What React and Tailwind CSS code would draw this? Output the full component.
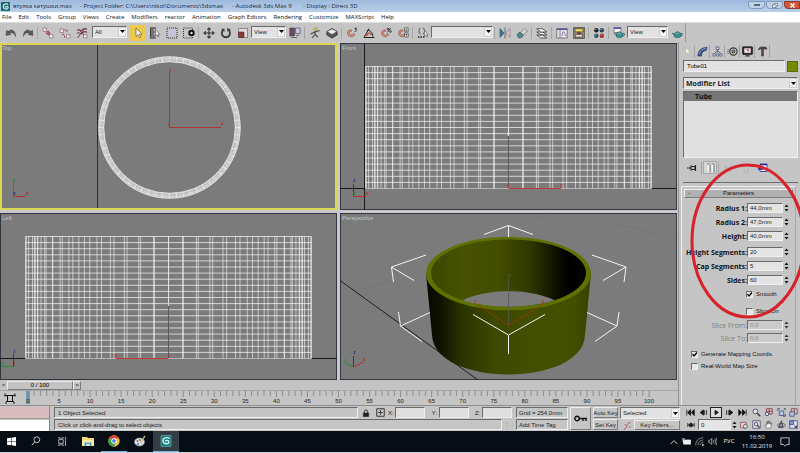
import clsx from 'clsx';

const menus = ['File', 'Edit', 'Tools', 'Group', 'Views', 'Create', 'Modifiers', 'reactor', 'Animation', 'Graph Editors', 'Rendering', 'Customize', 'MAXScript', 'Help'];

/* ---------- icons ---------- */

function Svg({ children, size = 'size-[12px]', box = '0 0 12 12' }) {
  return (
    <svg viewBox={box} className={clsx('shrink-0', size)} fill="none" stroke="#333" strokeWidth="1" aria-hidden="true">
      {children}
    </svg>
  );
}

const magnet = (
  <path d="M6 3.2C3.6 2 .8 4 1.6 7c.6 2.6 3.4 3.6 5.6 2.2L9 7.6 7.8 6.4 6.2 7.6C4.8 8.4 3.6 7.8 3.4 6.6c-.2-1.4.6-2.2 2-2z" fill="#d98a78" stroke="#7d4a40" strokeWidth=".5" />
);

const teapot = (
  <>
    <ellipse cx="6.5" cy="8" rx="3.6" ry="2.8" fill="#3f8f92" stroke="#1d4c50" strokeWidth=".5" />
    <path d="M3.4 8 1 6M10 6.5c2.2-.6 1.8 2.4-.4 2.6M5.6 5h1.8" stroke="#1d4c50" strokeWidth=".9" />
    <path d="M4.6 7c1-1 2-1 3-.8" stroke="#b5e2e2" strokeWidth=".7" />
  </>
);

const icons = {
  undo: <path d="M1 8.5 1.5 3l1.6 1.6C6 1.4 10.5 3 10.6 9.5 9.5 6 7 4.8 4.6 6.2L6 7.6z" fill="#5a5a5a" stroke="#333" strokeWidth=".4" />,
  redo: <path d="M11 8.5 10.5 3 8.9 4.6C6 1.4 1.5 3 1.4 9.5 2.5 6 5 4.8 7.4 6.2L6 7.6z" fill="#5a5a5a" stroke="#333" strokeWidth=".4" />,
  link: (
    <>
      <path d="M1 1h3.5v3.5H1zM7.5 7.5H11V11H7.5z" fill="#efe6ea" stroke="#8a6a76" strokeWidth=".7" />
      <path d="M4 5.5 7 8M5.5 4 8 6.8" stroke="#9a3550" strokeWidth="1.3" />
    </>
  ),
  unlink: (
    <>
      <path d="M1 2h3.5v3.5H1zM7.5 7.5H11V11H7.5z" fill="#efe6ea" stroke="#8a6a76" strokeWidth=".7" />
      <path d="m3 8 2-1.2M7 4.5 9 3M6 2v1.5M5.5 8.5v2" stroke="#9a3550" strokeWidth="1" />
    </>
  ),
  bind: (
    <>
      <path d="M1 3.5C3 1 4 5 6 3s3-2 5-.8M1 6.5C3 4 4 8 6 6s3-2 5-.8" stroke="#6b3a4c" strokeWidth="1.1" />
      <path d="M7.5 7.5H11V11H7.5z" fill="#efe6ea" stroke="#8a6a76" strokeWidth=".7" />
      <path d="M9 1 1.5 11M2 2l6 6" stroke="#7c2f48" strokeWidth="1" />
    </>
  ),
  arrow: <path d="M4 1v8.5l2-1.8 1.4 3 1.3-.6-1.3-2.9H10z" fill="#fff" stroke="#6d5410" strokeWidth=".7" />,
  byName: (
    <>
      <path d="M1 1h6M1 3h4M1 5h5M1 7h4M1 9h5M1 11h6" stroke="#222" strokeWidth="1.1" />
      <path d="M1.5 1v10" stroke="#444" />
      <path d="M6.5 2.500v6.5l1.500-1.300 1 2.300 1-.5-1-2.200h1.700z" fill="#eee" stroke="#333" strokeWidth=".5" />
    </>
  ),
  rect: <path d="M1 1h10v10H1z" fill="#c4c6d8" stroke="#222" strokeDasharray="1 1" />,
  crossing: (
    <>
      <path d="M.5 1h9v10h-9z" stroke="#333" strokeDasharray="1 1" />
      <circle cx="8.5" cy="6" r="3.2" fill="#111" stroke="none" />
      <circle cx="8.5" cy="6" r="1.2" fill="#ddd" stroke="none" />
    </>
  ),
  move: <path d="M6 1v10M1 6h10M4.3 2.7 6 1l1.7 1.7M4.3 9.3 6 11l1.7-1.7M2.7 4.3 1 6l1.7 1.7M9.3 4.3 11 6 9.3 7.7" stroke="#333" strokeWidth="1.1" />,
  rotate: (
    <>
      <path d="M3 3C.5 6 2 10.2 6 10.2S11 6 9 3.2" stroke="#3a3a3a" strokeWidth="1.9" />
      <path d="M7 4.5 7.5 1l3.500 1.800zM1 1.800h3.500V5z" fill="#3a3a3a" stroke="none" />
    </>
  ),
  scale: (
    <>
      <path d="M1.5 1.5h9v9h-9z" fill="#e6dcdc" stroke="#666" strokeWidth=".7" />
      <path d="M1.5 5h5.5v5.5H1.5z" fill="#8d3c3c" stroke="#552020" strokeWidth=".6" />
    </>
  ),
  center: (
    <>
      <path d="M.8 1h4.7v8H.8z" fill="#6a4a5c" stroke="#333" strokeWidth=".5" />
      <path d="M6.5 1h4.7v5.5H6.5z" fill="#c3c5dd" stroke="#4b4d70" strokeWidth=".7" />
      <path d="M2 10.5h6M7 8.5h3" stroke="#555" strokeWidth=".8" />
    </>
  ),
  manipulate: (
    <>
      <path d="M6 4v3.500L3 11M6 7.500 9 10M1.500 7 6 5l4.500-1.500" stroke="#444" strokeWidth="1.1" />
      <circle cx="6.500" cy="2.300" r="1.600" fill="#d9cd69" stroke="#77702a" strokeWidth=".5" />
    </>
  ),
  keyboard: (
    <>
      <path d="M.8 4.5 6 1.5l5.2 3V8L6 11.2.8 8z" fill="#555" stroke="#222" strokeWidth=".6" />
      <path d="M1 4.5 6 2l5 2.5-5 3z" fill="#eee" stroke="#444" strokeWidth=".5" />
    </>
  ),
  snap: (
    <>
      {magnet}
      <path d="M8.5 1.2h2L9.5 2.6c1.6 0 1.5 2-.8 1.7" stroke="#111" strokeWidth=".8" />
    </>
  ),
  angle: (
    <>
      <path d="M1 10.5h10.5M1 10.5 6 1.5M4 3.5c3.5-.5 5.5 2 6 6" stroke="#222" />
      <path d="M4 9c-.5-3 3-4 4.5-1" stroke="#b8604e" strokeWidth="1.8" />
    </>
  ),
  percent: (
    <>
      {magnet}
      <path d="m10.8 1-3.3 4.3" stroke="#111" strokeWidth=".8" />
      <circle cx="8" cy="2" r=".9" stroke="#111" strokeWidth=".7" />
      <circle cx="10.5" cy="4.5" r=".9" stroke="#111" strokeWidth=".7" />
    </>
  ),
  spinnerSnap: (
    <>
      {magnet}
      <path d="M7.5.8h3.7v4H7.5zM7.5 6h3.7v4H7.5z" fill="#ddd" stroke="#333" strokeWidth=".6" />
      <path d="m8.3 3.5 1-1.5 1 1.5zM8.3 7.3h2l-1 1.5z" fill="#111" stroke="none" />
    </>
  ),
  named: (
    <>
      <path d="M3.5 1C1.8 1 2.8 3.5 1.5 4c1.3.5.3 3 2 3M6 1c1.7 0 .7 2.5 2 3-1.3.5-.3 3-2 3" stroke="#444" strokeWidth=".9" />
      <path d="M7.5 3v6l1.3-1.1 1 2 .8-.4-.9-2H11z" fill="#eee" stroke="#444" strokeWidth=".5" />
      <path d="M1 10h1.5M3.5 10H5M6 10h1.5" stroke="#222" strokeWidth="1.3" />
    </>
  ),
  mirror: (
    <>
      <path d="M1 1.5v9L5 6z" fill="#3f7287" stroke="#274757" strokeWidth=".5" />
      <path d="M11 1.5v9L7 6z" fill="#d2c3c9" stroke="#7c6069" strokeWidth=".5" />
      <path d="M6 .5v11" stroke="#444" strokeWidth=".7" />
    </>
  ),
  align: (
    <>
      <path d="m4.5 5.5 4-4 3 2.5-4 4z" fill="#d8d0d4" stroke="#666" strokeWidth=".6" />
      <path d="m1 7.5 3-2.5 3.5 3.5-2.5 2.3H2.5z" fill="#4f8790" stroke="#22474e" strokeWidth=".6" />
    </>
  ),
  layers: (
    <>
      <path d="M.8 8h6l4 3h-6zM.8 5h6l4 3h-6z" fill="#eee" stroke="#333" strokeWidth=".8" />
      <path d="M.8 1.8h6l4 3.2h-6z" fill="#fff" stroke="#333" strokeWidth=".8" />
    </>
  ),
  curve: (
    <>
      <path d="M.8 1.5h10.4v9.5H.8z" fill="#e4e4ea" stroke="#555" strokeWidth=".7" />
      <path d="M.8 2.3h10.4" stroke="#5a5aa0" strokeWidth="1.5" />
      <path d="M4 3v8M6 9c.5-6 2.5-5 3.5 0" stroke="#7a5a8a" strokeWidth=".8" />
    </>
  ),
  schematic: (
    <>
      <path d="M.5.5h11v11H.5z" fill="#8a8578" stroke="#4a473f" strokeWidth=".7" />
      <path d="M2 1.800h8v3H2z" fill="#f4df5c" stroke="#222" strokeWidth=".5" />
      <path d="M2.500 7.500h7v2.500h-7z" fill="#f3d9d0" stroke="#222" strokeWidth=".5" />
      <path d="M6 4.800v2.700M4 6.200h4" stroke="#7d2020" strokeWidth=".9" />
    </>
  ),
  material: (
    <>
      <circle cx="3.3" cy="3.3" r="2.2" fill="#222" stroke="none" />
      <circle cx="8.8" cy="3.3" r="2.2" fill="#27475f" stroke="none" />
      <circle cx="3.3" cy="8.8" r="2.2" fill="#25535e" stroke="none" />
      <circle cx="8.8" cy="8.8" r="2.2" fill="#a02c2c" stroke="none" />
      <path d="M2.3 2.5h1M7.8 2.5h1M2.3 8h1M7.8 8h1" stroke="#eee" strokeWidth=".8" />
    </>
  ),
  render: (
    <>
      <path d="M1 .5h7v5H1z" fill="#f2f2f7" stroke="#555" strokeWidth=".6" />
      <path d="M1 1.2h7" stroke="#4646a0" strokeWidth="1.4" />
      {teapot}
    </>
  ),
  quick: teapot,
  create: <path d="M4 1.5v7l1.8-1.5 1.3 3 1.2-.6L7 6.7h2.3zM1.5 1l1 1M1 4h1.5M9 2 7.5 3" fill="#fbfbf0" stroke="#a5a59a" strokeWidth=".6" />,
  modify: (
    <>
      <path d="M1 11C1 5 4.5 1.5 11 1.5L10 5C7 5 5 7 4.8 11z" fill="#39528c" stroke="#1c2545" strokeWidth=".6" />
      <path d="M2.5 9C3 5 6 3 10 2.7" stroke="#b3c2ea" strokeWidth=".7" />
    </>
  ),
  hierarchy: (
    <>
      <path d="M4.5 1h3v3h-3z" fill="#dde" stroke="#335" strokeWidth=".7" />
      <path d="M6 4v3M6 5 2.5 8.5M6 5l3.5 3.5" stroke="#456" strokeWidth=".8" />
      <path d="M1 8.5h2.5V11H1zM4.8 8.5h2.5V11H4.8zM8.5 8.5H11V11H8.500z" fill="#cde" stroke="#335" strokeWidth=".6" />
    </>
  ),
  motion: (
    <>
      <circle cx="7" cy="6" r="4" stroke="#333" strokeWidth="1.2" />
      <circle cx="7" cy="6" r="1.7" fill="#888" stroke="#222" strokeWidth=".8" />
      <path d="M.5 4h2M0 6h2M.5 8h2" stroke="#666" strokeWidth=".8" />
    </>
  ),
  display: (
    <>
      <path d="M.8 1h10.4v8H.8z" fill="#333" stroke="#111" />
      <path d="M2.5 2.5h7v5h-7z" fill="#f3e3ea" stroke="none" />
      <path d="M4.5 3.5h3l-.5 3z" fill="#c23a5e" stroke="none" />
      <path d="M3.5 10.8h5" stroke="#222" strokeWidth="1.2" />
    </>
  ),
  utilities: <path d="M1.500 4C2 1.800 3.500 1 5.500 1h4l1.500 2.300H7V11H5V3.300C3.800 3.100 3 3.300 2.500 4z" fill="#5a4444" stroke="#222" strokeWidth=".5" />,
  pin: <path d="M1 6h4M5 3.5v5M5 4.5h4v3H5M9.5 3v6" stroke="#222" strokeWidth="1.1" />,
  showEnd: (
    <>
      <path d="M3.5 2v8.5M7.5 2v8.5" stroke="#f5f5f5" strokeWidth="2" />
      <path d="M2 2h3M6.5 2h3M5 3v7.5M9 3v7.5" stroke="#444" strokeWidth=".7" />
    </>
  ),
  unique: <path d="M2 4l3 4M7 5v5M4 9h2" stroke="#a9a9a9" strokeWidth="1" />,
  trash: <path d="M3 3h6M4 4v6h4V4" stroke="#b4b4b4" strokeWidth="1" />,
  configure: (
    <>
      <path d="M3 2h7v7.5H3z" fill="#eef" stroke="#22228a" strokeWidth=".8" />
      <path d="M3 2.600h7M1 7h5" stroke="#22228a" strokeWidth="1.400" />
    </>
  ),
};

function ToolButton({ name, label, className }) {
  return (
    <button type="button" aria-label={label || name} className={clsx('flex h-[16px] w-[17px] shrink-0 items-center justify-center', className)}>
      <Svg>{icons[name]}</Svg>
    </button>
  );
}

function Sep() {
  return (
    <span className="flex w-[3px] shrink-0 justify-center">
      <span className="h-[12px] w-px bg-[#a6a6a6]" />
    </span>
  );
}

const sunken = 'border border-t-[#6a6a6a] border-l-[#6a6a6a] border-r-[#efefef] border-b-[#efefef]';
const raised = 'border border-t-[#ededed] border-l-[#ededed] border-r-[#7c7c7c] border-b-[#7c7c7c]';

function Combo({ label, value, className, textClass = 'text-[6px]' }) {
  return (
    <span className={clsx('relative block h-[12px] shrink-0', className)}>
      <select aria-label={label} className={clsx('block h-full w-full appearance-none bg-[#e2e2e2] pl-[2px] leading-none text-[#222] outline-none', sunken, textClass)}>
        <option>{value}</option>
      </select>
      <span className="pointer-events-none absolute top-px right-px bottom-px flex w-[8px] items-center justify-center border border-[#cfcfcf] bg-[#f4f4f4]">
        <svg viewBox="0 0 5 3" className="h-[3px] w-[5px]">
          <path d="M0 0h5L2.5 3z" fill="#000" />
        </svg>
      </span>
    </span>
  );
}

/* ---------- top bars ---------- */

function TitleBar() {
  return (
    <header className="flex h-[12px] shrink-0 items-center bg-linear-to-b from-[#9db9dc] to-[#b9cfe9] font-['Open_Sans',sans-serif] text-[6px] leading-none text-[#1b2636]">
      <svg viewBox="0 0 10 10" className="ml-px size-[9px]">
        <rect width="10" height="10" rx="1" fill="#17686a" />
        <path d="M8 3C6 1 2 2.5 2.500 5.500S7 8.500 8 6.500c0-1.500-2.500-2-3.500-.5" fill="none" stroke="#d6f3ef" strokeWidth="1.3" />
      </svg>
      <h1 className="ml-[3px] w-[67px] whitespace-nowrap">втулка катушки.max</h1>
      <span className="w-[152px] whitespace-nowrap">- Project Folder: C:\Users\nikol\Documents\3dsmax</span>
      <span className="w-[71px] whitespace-nowrap">- Autodesk 3ds Max 9</span>
      <span className="whitespace-nowrap">- Display : Direct 3D</span>
      <span className="mb-[2px] ml-auto flex gap-px">
        <button type="button" aria-label="Minimize" className="flex h-[8px] w-[17px] items-center justify-center rounded-b-sm border border-[#8499b5] bg-[#c0d2e8]">
          <span className="h-[2px] w-[6px] border border-[#5a6a80] bg-white" />
        </button>
        <button type="button" aria-label="Restore" className="flex h-[8px] w-[17px] items-center justify-center rounded-b-sm border border-[#8499b5] bg-[#c0d2e8]">
          <svg viewBox="0 0 6 5" className="h-[5px] w-[6px]" fill="#fff" stroke="#5a6a80" strokeWidth=".7">
            <path d="M2 .5h3.5v2.5H2z" />
            <path d="M.5 2H4v2.5H.5z" />
          </svg>
        </button>
        <button type="button" aria-label="Close" className="flex h-[8px] w-[16px] items-center justify-center rounded-bl-sm border border-[#8e3a2c] bg-[#d2553c]">
          <svg viewBox="0 0 5 5" className="size-[5px]" stroke="#fff" strokeWidth="1.3">
            <path d="m.5.5 4 4M4.5.5l-4 4" />
          </svg>
        </button>
      </span>
    </header>
  );
}

function MenuBar() {
  return (
    <nav className="flex h-[10px] shrink-0 items-center gap-[7px] bg-white pl-[2px] font-['Open_Sans',sans-serif] text-[6px] leading-none text-[#111]">
      {menus.map((item) => (
        <button key={item} type="button" className="whitespace-nowrap">
          {item}
        </button>
      ))}
    </nav>
  );
}

function Toolbar() {
  return (
    <div className="flex h-[20px] shrink-0 items-center border-t border-[#dcdcdc] bg-[#c5c5c5] pl-[2px]">
      <ToolButton name="undo" />
      <ToolButton name="redo" />
      <Sep />
      <ToolButton name="link" />
      <ToolButton name="unlink" />
      <ToolButton name="bind" />
      <Combo label="Selection filter" value="All" className="mr-[2px] mb-[2px] ml-[2px] w-[35px]" />
      <ToolButton name="arrow" label="Select" className="bg-[#edc850]" />
      <ToolButton name="byName" />
      <ToolButton name="rect" />
      <ToolButton name="crossing" />
      <Sep />
      <ToolButton name="move" />
      <ToolButton name="rotate" />
      <ToolButton name="scale" />
      <Combo label="Reference coordinate system" value="View" className="mb-[2px] w-[35px]" />
      <ToolButton name="center" />
      <Sep />
      <ToolButton name="manipulate" />
      <ToolButton name="keyboard" />
      <Sep />
      <ToolButton name="snap" />
      <ToolButton name="angle" />
      <ToolButton name="percent" />
      <ToolButton name="spinnerSnap" />
      <Sep />
      <ToolButton name="named" />
      <Combo label="Named selection sets" value="" className="mb-[2px] w-[62px]" />
      <Sep />
      <ToolButton name="mirror" />
      <ToolButton name="align" />
      <Sep />
      <ToolButton name="layers" />
      <Sep />
      <ToolButton name="curve" />
      <ToolButton name="schematic" />
      <Sep />
      <ToolButton name="material" />
      <Sep />
      <ToolButton name="render" />
      <Combo label="Render type" value="View" className="mb-[2px] w-[41px]" />
      <ToolButton name="quick" />
      <span className="h-full w-px bg-[#9a9a9a]" />
    </div>
  );
}

/* ---------- viewports ---------- */

function Viewport({ name, active, children }) {
  return (
    <section className={clsx('relative min-h-0 min-w-0 bg-[#7b7b7b] ring-inset', active ? 'ring-2 ring-[#dcd650]' : 'ring-1 ring-[#34363f]')}>
      <svg viewBox="0 0 337 167" className="block h-full w-full" fill="none">
        {children}
      </svg>
      <h2 className="absolute top-px left-[2px] text-[6px] leading-[8px] text-[#c6c6c6]">{name}</h2>
    </section>
  );
}

function AxisLabel({ x, y, color, children }) {
  return (
    <text x={x} y={y} fill={color} fontSize="5" fontWeight="bold">
      {children}
    </text>
  );
}

const levels = Array.from({ length: 21 }, (_, i) => i);
const sides = Array.from({ length: 31 }, (_, i) => ((i - 15) * 6 * Math.PI) / 180);

// side view of the tube: 20 height segments, 60 sides, outer and inner wall
function SideMesh({ cx }) {
  return (
    <g stroke="#fff">
      {levels.map((i) => (
        <path key={i} d={`M${cx - 143} ${23.5 + i * 6.1}H${cx + 143}`} strokeWidth=".9" strokeOpacity=".75" />
      ))}
      {sides.map((a) => (
        <g key={a} strokeOpacity=".7" strokeWidth=".8">
          <path d={`M${cx + 143 * Math.sin(a)} 23.5v122`} />
          <path d={`M${cx + 134 * Math.sin(a)} 23.5v122`} />
        </g>
      ))}
    </g>
  );
}

function TopView() {
  return (
    <Viewport name="Top" active>
      <path d="M97.5 2v163" stroke="#2e2e2e" />
      <circle cx="169.5" cy="84.5" r="68.2" stroke="#c6c6c6" strokeWidth="5.5" />
      <circle cx="169.5" cy="84.5" r="68.2" stroke="#efefef" strokeWidth="5" strokeDasharray=".8 6.320" />
      <circle cx="169.5" cy="84.5" r="70.7" stroke="#e4e4e4" strokeWidth=".8" />
      <circle cx="169.5" cy="84.5" r="69" stroke="#ececec" strokeWidth=".7" strokeDasharray="2 2" />
      <circle cx="169.5" cy="84.5" r="67.4" stroke="#a6a6a6" strokeWidth=".7" strokeDasharray="1 3" />
      <circle cx="169.5" cy="84.5" r="65.8" stroke="#e8e8e8" strokeWidth=".8" />
      <path d="M169.5 29v55.5H221" stroke="#b03434" />
      <AxisLabel x="169" y="29" color="#b03434">y</AxisLabel>
      <AxisLabel x="221" y="82" color="#b03434">x</AxisLabel>
      <AxisLabel x="168" y="83" color="#b03434">z</AxisLabel>
      <path d="M13.5 137v16" stroke="#2d8b34" />
      <path d="M13.5 153.5H26" stroke="#b8302c" />
      <AxisLabel x="13" y="138" color="#2d8b34">y</AxisLabel>
      <AxisLabel x="26" y="152" color="#b8302c">x</AxisLabel>
      <AxisLabel x="13" y="152" color="#22307c">z</AxisLabel>
    </Viewport>
  );
}

function FrontView() {
  return (
    <Viewport name="Front">
      <path d="M24.5 0v167M0 145.5h337" stroke="#16181c" />
      <SideMesh cx={168.5} />
      <path d="M168.5 93v52" stroke="#5c5c5c" />
      <path d="M168.5 145.5H221" stroke="#c23a3a" />
      <AxisLabel x="167" y="92" color="#ddd">z</AxisLabel>
      <AxisLabel x="167" y="144" color="#c23a3a">y</AxisLabel>
      <AxisLabel x="220" y="144" color="#c23a3a">x</AxisLabel>
      <path d="M13.5 141v12" stroke="#2a2f9a" />
      <path d="M13.5 153.5H26" stroke="#b8302c" />
      <AxisLabel x="13" y="139" color="#2a2f9a">z</AxisLabel>
      <AxisLabel x="26" y="152" color="#b8302c">x</AxisLabel>
      <AxisLabel x="13" y="152" color="#2d8b34">y</AxisLabel>
    </Viewport>
  );
}

function LeftView() {
  return (
    <Viewport name="Left">
      <path d="M0 145.5h337" stroke="#16181c" />
      <SideMesh cx={168.5} />
      <path d="M168.5 93v52" stroke="#5c5c5c" />
      <path d="M168.5 145.5H116" stroke="#c23a3a" />
      <AxisLabel x="168" y="92" color="#aaa">z</AxisLabel>
      <AxisLabel x="115" y="144" color="#c23a3a">y</AxisLabel>
      <AxisLabel x="168" y="144" color="#c23a3a">x</AxisLabel>
      <path d="M13.5 141v13" stroke="#2a2f9a" />
      <path d="M13.5 153.5H2" stroke="#2d8b34" />
      <AxisLabel x="13" y="140" color="#2a2f9a">z</AxisLabel>
      <AxisLabel x="1" y="152" color="#2d8b34">y</AxisLabel>
      <AxisLabel x="13" y="152" color="#b8302c">x</AxisLabel>
    </Viewport>
  );
}

function PerspectiveView() {
  return (
    <Viewport name="Perspective">
      <defs>
        <linearGradient id="outer" x1="86" x2="251" y1="0" y2="0" gradientUnits="userSpaceOnUse">
          <stop offset="0" stopColor="#060700" />
          <stop offset=".08" stopColor="#0e1100" />
          <stop offset=".22" stopColor="#2b3400" />
          <stop offset=".4" stopColor="#3c4700" />
          <stop offset=".65" stopColor="#434f00" />
          <stop offset=".9" stopColor="#424e00" />
          <stop offset="1" stopColor="#374100" />
        </linearGradient>
        <linearGradient id="inner" x1="91" x2="246" y1="0" y2="0" gradientUnits="userSpaceOnUse">
          <stop offset="0" stopColor="#3c4700" />
          <stop offset=".2" stopColor="#465200" />
          <stop offset=".45" stopColor="#424d00" />
          <stop offset=".65" stopColor="#2e3600" />
          <stop offset=".8" stopColor="#0f1200" />
          <stop offset=".89" stopColor="#000" />
          <stop offset="1" stopColor="#050600" />
        </linearGradient>
        <clipPath id="mouth">
          <ellipse cx="168.5" cy="60" rx="77.5" ry="33.8" />
        </clipPath>
      </defs>
      <path d="M0 67.5 138 167" stroke="#1c1c1c" />
      <path d="M20 77 52 68M185 10l25-8M275 10l60 16" stroke="#757575" />
      <path d="M86 60.5 92 122C93 147 128 161.5 168.5 161.5S244 147 245 122L251 60.5z" fill="url(#outer)" />
      <ellipse cx="168.5" cy="60.5" rx="82.5" ry="36.7" fill="#5f7200" />
      <ellipse cx="168.5" cy="60" rx="77.5" ry="33.8" fill="url(#inner)" />
      <g clipPath="url(#mouth)">
        <ellipse cx="168.5" cy="118" rx="72" ry="40" fill="#7b7b7b" />
      </g>
      <path d="M168.5 65v47" stroke="#565656" strokeWidth=".8" />
      <path d="m137 91 31.5 21.5L203 91" stroke="#8c3a0c" />
      <AxisLabel x="168" y="64" color="#555">z</AxisLabel>
      <AxisLabel x="134" y="90" color="#b8401c">y</AxisLabel>
      <AxisLabel x="202" y="90" color="#b8401c">x</AxisLabel>
      <g stroke="#f4f4f4">
        <path d="m144 21.5 24.5-9L193 21.5M168.5 12.5V24" />
        <path d="m86 42-34.5 12L74 67.5M51.5 54l2 15" />
        <path d="m252 42 34 12-23 13.5M286 54l-2 15" />
        <path d="M90 99.5 60.5 113 82 128.5M60.5 113 58.5 99" />
        <path d="m247 99.5 30 13.5-22 15.5M277 113l2-14" />
        <path d="m133 101.5 35.5 20.5L205 101.5M168.5 122v19" />
      </g>
      <path d="M13.5 143v11" stroke="#2a2f9a" />
      <path d="m13.5 154 10-5" stroke="#b8302c" />
      <path d="m13.5 154-8-4" stroke="#2d8b34" />
      <AxisLabel x="13" y="141" color="#2a2f9a">z</AxisLabel>
      <AxisLabel x="23" y="148" color="#b8302c">x</AxisLabel>
      <AxisLabel x="4" y="149" color="#2d8b34">y</AxisLabel>
    </Viewport>
  );
}

function TimeSlider() {
  return (
    <div className="flex h-[11px] shrink-0 items-center border-b border-[#a8a8a8] bg-[#c3c3c3] text-[6px] leading-none">
      <button type="button" aria-label="Previous frame" className="w-[7px]">&lt;</button>
      <button type="button" className={clsx('h-[9px] w-[66px]', raised)}>0 / 100</button>
      <button type="button" aria-label="Next frame" className={clsx('flex h-[9px] w-[8px] items-center justify-center', raised)}>&gt;</button>
    </div>
  );
}

function TrackBar() {
  const frames = Array.from({ length: 101 }, (_, i) => i);
  return (
    <div className="flex h-[14px] shrink-0 items-center bg-[#c5c5c5]">
      <svg viewBox="0 0 678 14" className="h-full w-full">
        <path d="M5 4.5h10M6 10.5h8M7.5 4.5v6M12.5 4.5v6M5 2.5v3M15 2.5v3M5 12h2M13 12h2" stroke="#111" fill="none" />
        <rect x="26" y="0" width="4" height="13" fill="#6f9bb0" />
        {frames.map((f) => (
          <path key={f} d={`M${28 + f * 6.21} 0v${f % 5 === 0 ? 6 : 5}`} stroke="#7e7e7e" strokeWidth=".8" />
        ))}
        {frames.filter((f) => f % 5 === 0).map((f) => (
          <text key={f} x={28 + f * 6.21} y="12" fontSize="6" textAnchor="middle" fill="#222">
            {f}
          </text>
        ))}
      </svg>
    </div>
  );
}

/* ---------- command panel ---------- */

function Spinner({ disabled }) {
  return (
    <span className={clsx('flex h-[9px] w-[7px] flex-col items-center justify-center', disabled && 'opacity-80')}>
      <svg viewBox="0 0 5 8" className="h-[8px] w-[5px]">
        <path d="M.5 3 2.5.5 4.5 3zM.5 5h4l-2 2.5z" fill="#111" />
      </svg>
    </span>
  );
}

function Param({ id, label, value, disabled }) {
  return (
    <div className="flex h-[10px] items-center">
      <label
        htmlFor={id}
        className={clsx(
          "flex-1 text-right font-['Open_Sans',sans-serif] text-[7px] leading-none whitespace-nowrap",
          disabled ? 'text-[#7d7d7d]' : 'font-bold text-[#111]'
        )}
      >
        {label}
      </label>
      <input
        id={id}
        type="text"
        defaultValue={value}
        disabled={disabled}
        className={clsx('h-[10px] w-[36px] px-[2px] text-[6px] leading-none outline-none', sunken, disabled ? 'bg-[#cbcbcb] text-[#8a8a8a]' : 'bg-[#e4e4e4] text-[#222]')}
      />
      <Spinner disabled={disabled} />
    </div>
  );
}

function Check({ id, label, checked, className }) {
  return (
    <div className={clsx('flex h-[8px] items-center gap-[3px]', className)}>
      <span className="relative flex size-[7px]">
        <input id={id} type="checkbox" defaultChecked={checked} className={clsx('peer size-[7px] appearance-none bg-[#e6e6e6]', sunken)} />
        <svg viewBox="0 0 7 7" className="pointer-events-none absolute inset-0 hidden size-[7px] peer-checked:block" fill="none" stroke="#000" strokeWidth="1.3">
          <path d="M1.5 3.2 3 5l3-3.5" />
        </svg>
      </span>
      <label htmlFor={id} className="text-[6px] leading-none whitespace-nowrap text-[#111]">
        {label}
      </label>
    </div>
  );
}

function CommandPanel() {
  return (
    <aside className="relative w-[122px] shrink-0 overflow-hidden border-l border-[#8f8f8f] bg-[#c5c5c5] pr-[2px] pl-[4px]">
      <div className="-ml-[3px] flex h-[18px] items-center">
        {['create', 'modify', 'hierarchy', 'motion', 'display', 'utilities'].map((tab) => (
          <button key={tab} type="button" aria-label={tab} className="flex h-[13px] w-[15px] items-center justify-center border-r border-[#a2a2a2]">
            <Svg size="size-[11px]">{icons[tab]}</Svg>
          </button>
        ))}
      </div>
      <div className="flex h-[12px] items-center justify-between">
        <input aria-label="Object name" type="text" defaultValue="Tube01" className={clsx('h-[12px] w-[102px] bg-[#e2e2e2] px-[3px] text-[6px] outline-none', sunken)} />
        <button type="button" aria-label="Object color" className="size-[11px] border border-[#5c6b10] bg-[#738a00]" />
      </div>
      <Combo label="Modifier List" value="Modifier List" className="mt-[5px]" textClass="text-[7px] font-bold font-['Open_Sans',sans-serif]" />
      <ul className={clsx('mt-[2px] h-[67px] bg-[#e0e0e0]', sunken)}>
        <li className="h-[9px] bg-[#767676] pl-[11px] font-['Open_Sans',sans-serif] text-[7px] leading-[9px] font-bold text-[#111]">Tube</li>
      </ul>
      <div className="mt-[3px] flex h-[13px] items-center">
        <ToolButton name="pin" />
        <Sep />
        <span className="h-[13px] w-[14px] overflow-hidden border border-[#aaa] bg-[#d4d4d4]">
          <ToolButton name="showEnd" className="-m-[2px]" />
        </span>
        <Sep />
        <ToolButton name="unique" />
        <ToolButton name="trash" />
        <ToolButton name="configure" />
      </div>
      <hr className="mt-[8px] border-t border-[#6e6e6e]" />
      <div className="mt-[3px] mr-[2px] -ml-[2px] h-[222px] border border-[#a6a6a6] border-t-[#eee] border-l-[#eee] px-[2px] pt-[2px]">
        <button type="button" className={clsx('relative block h-[9px] w-full bg-[#b0b0b0] text-center text-[6px] leading-[7px] text-[#111]', raised)}>
          <span className="absolute left-[3px]">-</span>
          Parameters
        </button>
        <form className="pr-[3px]">
          <div className="mt-[5px] flex flex-col gap-[4px]">
            <Param id="radius1" label="Radius 1:" value="44,0mm" />
            <Param id="radius2" label="Radius 2:" value="47,0mm" />
            <Param id="height" label="Height:" value="40,0mm" />
          </div>
          <div className="mt-[6px] flex flex-col gap-[4px]">
            <Param id="heightSegs" label="Height Segments:" value="20" />
            <Param id="capSegs" label="Cap Segments:" value="5" />
            <Param id="sides" label="Sides:" value="60" />
          </div>
          <Check id="smooth" label="Smooth" checked className="mt-[5px] ml-[62px]" />
          <Check id="sliceOn" label="Slice On" className="mt-[9px] ml-[62px]" />
          <div className="mt-[5px] flex flex-col gap-[3px]">
            <Param id="sliceFrom" label="Slice From:" value="0,0" disabled />
            <Param id="sliceTo" label="Slice To:" value="0,0" disabled />
          </div>
          <Check id="mapping" label="Generate Mapping Coords." checked className="mt-[7px] ml-[7px]" />
          <Check id="realWorld" label="Real-World Map Size" className="mt-[4px] ml-[7px]" />
        </form>
      </div>
      {/* marker round the tube dimensions */}
      <svg viewBox="0 0 122 363" className="pointer-events-none absolute top-0 left-0 h-[363px] w-[122px]" fill="none">
        <ellipse cx="69" cy="199" rx="56" ry="76" stroke="#d8222a" strokeWidth="3" />
      </svg>
    </aside>
  );
}

/* ---------- status bar ---------- */

function Coord({ axis }) {
  return (
    <span className="flex items-center">
      <label htmlFor={`coord${axis}`} className="w-[7px]">{axis}:</label>
      <input id={`coord${axis}`} type="text" className={clsx('h-[11px] w-[30px] bg-[#dedede] px-[2px] outline-none', sunken)} />
    </span>
  );
}

const play = {
  start: <path d="M1 2v8M6 2 2 6l4 4zM11 2 7 6l4 4z" />,
  prev: <path d="M6 2.5 1.5 6 6 9.5zM7.5 3v6M10 3v6" />,
  play: <path d="M4 3v6l4.5-3z" />,
  next: <path d="m6 2.5 4.5 3.5L6 9.5zM4.5 3v6M2 3v6" />,
  end: <path d="M11 2v8M6 2l4 4-4 4zM1 2l4 4-4 4z" />,
};

const nav = {
  zoom: (
    <>
      <circle cx="4.5" cy="4.5" r="3.2" fill="#dfe6f2" stroke="#334" />
      <path d="m7 7 4 4" stroke="#334" strokeWidth="1.8" />
    </>
  ),
  zoomAll: (
    <>
      <path d="M3 1h8v7H3zM7 1v7M3 4.5h8" stroke="#8a2f3c" />
      <circle cx="4" cy="8" r="2.3" fill="#dfe6f2" stroke="#335" />
    </>
  ),
  extents: (
    <>
      <path d="M3 4h6v6H3z" fill="#b9c1de" stroke="#3c4a86" />
      <path d="M1 4V1h3M11 8v3H8M9 1l2-.5V3" stroke="#334" />
    </>
  ),
  extentsAll: (
    <>
      <path d="M3 1h8v7H3zM7 1v7" stroke="#8a2f3c" />
      <path d="M1 5h6v6H1z" fill="#b9c1de" stroke="#3c4a86" />
    </>
  ),
  region: (
    <>
      <path d="M1 1h10v10H1z" fill="#e2e2ee" stroke="#445" />
      <circle cx="5.5" cy="5.5" r="2.3" stroke="#334" />
      <path d="m7 7 3 3" stroke="#334" strokeWidth="1.5" />
    </>
  ),
  pan: <path d="M3.5 11 1 7l1-.8 1.5 1.3V3l1-.5.6 3V1.5l1.1-.3.5 4 .6-3.4 1 .2v4L9.5 4l1 .3-1 4.2L8.5 11z" fill="#f4f4f4" stroke="#333" strokeWidth=".7" />,
  orbit: (
    <>
      <path d="M6 1 2 10h6z" fill="#99a" stroke="#334" />
      <ellipse cx="6" cy="7" rx="5.3" ry="2.3" stroke="#333" strokeWidth=".8" />
    </>
  ),
  maximize: (
    <>
      <path d="M1 1h10v10H1z" fill="#dfe0f0" stroke="#334a86" />
      <path d="M1 1h5v5H1z" fill="#8f9bc8" stroke="#334a86" />
      <path d="m7 7 3 3M10 7.5V10H7.5" stroke="#222" />
    </>
  ),
};

function StatusBar() {
  return (
    <footer className="flex h-[26px] shrink-0 gap-[2px] border-t border-[#8e8e8e] bg-[#c5c5c5] text-[6px] leading-none text-[#222]">
      <div className="flex w-[50px] shrink-0 flex-col gap-px border-r border-[#888] pt-px">
        <div className="flex-1 border-b border-[#999] bg-[#dbbcbe]" />
        <div className="flex-1 bg-white" />
      </div>
      <div className="flex min-w-0 flex-1 flex-col gap-px py-px pl-[2px]">
        <div className="flex flex-1 items-center justify-between">
          <p className={clsx('flex h-full flex-1 items-center pl-[3px]', sunken)}>1 Object Selected</p>
          <button type="button" aria-label="Selection lock" className="flex w-[16px] justify-center">
            <Svg size="size-[8px]">
              <path d="M3.5 6V3.5C3.5 1 8.5 1 8.5 3.5V6" strokeWidth="1.5" />
              <path d="M2 6h8v5.5H2z" fill="#222" />
            </Svg>
          </button>
          <button type="button" aria-label="Absolute mode" className="mr-[2px] flex w-[12px] justify-center">
            <Svg size="size-[9px]">
              <path d="M1 1h10v10H1zM6 3v6M3 6h6" strokeWidth="1.3" />
            </Svg>
          </button>
          <span className="flex w-[124px] justify-between">
            <Coord axis="X" />
            <Coord axis="Y" />
            <Coord axis="Z" />
          </span>
        </div>
        <div className="flex flex-1 items-center">
          <p className={clsx('flex h-full flex-1 items-center pl-[3px]', sunken)}>Click or click-and-drag to select objects</p>
          <span className="w-[10px] text-center text-[#888]">⁝</span>
        </div>
      </div>
      <div className="flex w-[54px] shrink-0 flex-col gap-px py-px pl-[2px]">
        <p className={clsx('flex flex-1 items-center pl-[2px] whitespace-nowrap', sunken)}>Grid = 254,0mm</p>
        <button type="button" className={clsx('flex-1 pl-[2px] text-left whitespace-nowrap', sunken)}>Add Time Tag</button>
      </div>
      <button type="button" aria-label="Set keys" className={clsx('my-px flex w-[21px] shrink-0 items-center justify-center', raised)}>
        <svg viewBox="0 0 14 7" className="h-[7px] w-[14px]" fill="none" stroke="#111" strokeWidth="1.4">
          <circle cx="3" cy="3.5" r="2.2" />
          <path d="M5.2 3.5H13M9 3.5V6M12 3.5V6" />
        </svg>
      </button>
      <div className="flex w-[25px] shrink-0 flex-col gap-px py-px">
        <button type="button" className={clsx('flex flex-1 items-center justify-center whitespace-nowrap', raised)}>Auto Key</button>
        <button type="button" className={clsx('flex flex-1 items-center justify-center whitespace-nowrap', raised)}>Set Key</button>
      </div>
      <div className="flex w-[60px] shrink-0 flex-col gap-px py-px">
        <Combo label="Key selection" value="Selected" />
        <div className="flex flex-1 items-center">
          <button type="button" aria-label="Default tangents" className="flex w-[14px] justify-center">
            <Svg size="size-[9px]">
              <path d="M1 11c5 0 3-9 9-9M2 5h2M8 8h2" stroke="#a8323e" />
            </Svg>
          </button>
          <button type="button" className={clsx('h-full flex-1 whitespace-nowrap', raised)}>Key Filters...</button>
        </div>
      </div>
      <div className="flex w-[66px] shrink-0 flex-col gap-px py-px pl-[2px]">
        <div className="flex flex-1 items-center justify-between">
          {Object.keys(play).map((key) => (
            <button key={key} type="button" aria-label={key} className={clsx('flex h-[11px] w-[12px] items-center justify-center', key === 'play' && 'border border-[#222] bg-[#ddd]')}>
              <svg viewBox="0 0 12 12" className="size-[9px]" fill="#111" stroke="#111">{play[key]}</svg>
            </button>
          ))}
        </div>
        <div className="flex flex-1 items-center">
          <button type="button" aria-label="Key mode" className="flex w-[14px] justify-center">
            <svg viewBox="0 0 12 12" className="size-[8px]" fill="#111" stroke="#111">
              <path d="M1 3v6M11 3v6M5.5 3 2 6l3.5 3zM6.5 3 10 6 6.5 9z" />
            </svg>
          </button>
          <input aria-label="Current frame" type="text" defaultValue="0" className={clsx('h-[11px] w-[33px] bg-[#e4e4e4] px-[2px] outline-none', sunken)} />
          <Spinner />
          <button type="button" aria-label="Time configuration" className="ml-auto">
            <Svg size="size-[8px]">
              <path d="M1 2h8v8H1z" fill="#e3d4d8" stroke="#8a2f3c" />
              <circle cx="8" cy="8" r="3" fill="#ddd" />
            </Svg>
          </button>
        </div>
      </div>
      <div className="grid w-[50px] shrink-0 grid-cols-4 grid-rows-2 place-items-center">
        {Object.keys(nav).map((key) => (
          <button key={key} type="button" aria-label={key}>
            <Svg size="size-[9px]">{nav[key]}</Svg>
          </button>
        ))}
      </div>
    </footer>
  );
}

/* ---------- taskbar ---------- */

function TaskButton({ label, className, children }) {
  return (
    <button type="button" aria-label={label} className={clsx('flex h-[21px] shrink-0 items-center justify-center border-b', className || 'w-[26px] border-transparent')}>
      {children}
    </button>
  );
}

function Taskbar() {
  return (
    <div className="flex h-[22px] shrink-0 items-center border-b border-[#c8d4dc] bg-[#060d14] font-['Open_Sans',sans-serif] text-[7px] leading-[9px] text-[#e8e8e8]">
      <TaskButton label="Start" className="w-[23px] border-transparent">
        <Svg size="size-[9px]">
          <path d="M0 1.7 5.3 1v4.7H0zM6 .9 12 0v5.7H6zM0 6.4h5.3V11L0 10.3zM6 6.4h6V12l-6-.9z" fill="#fff" stroke="none" />
        </Svg>
      </TaskButton>
      <TaskButton label="Search">
        <Svg size="size-[10px]">
          <circle cx="7" cy="4.5" r="3.5" stroke="#ddd" />
          <path d="m4.5 7-3.5 4" stroke="#ddd" strokeWidth="1.2" />
        </Svg>
      </TaskButton>
      <TaskButton label="Task view">
        <Svg size="size-[9px]">
          <path d="M1 3.5h6v5H1zM1 0v1.5h6V0M1 12v-1.5h6V12M10 0v3M10 5v7M9 4h2" stroke="#ddd" />
        </Svg>
      </TaskButton>
      <TaskButton label="Explorer">
        <Svg size="size-[12px]">
          <path d="M0 2h5l1 1h6v8H0z" fill="#f3d776" stroke="none" />
          <path d="M0 5h12v6H0z" fill="#fbeba6" stroke="none" />
          <path d="M2.5 11V7.5h7V11H7.5V9h-3v2z" fill="#49a5d9" stroke="none" />
        </Svg>
      </TaskButton>
      <TaskButton label="Chrome" className="w-[26px] border-[#76b9ed]">
        <Svg size="size-[12px]">
          <circle cx="6" cy="6" r="5.7" fill="#f0c330" stroke="none" />
          <path d="M6 6 1 3.2A5.7 5.7 0 0 1 11.2 3.6H6z" fill="#dc4437" stroke="none" />
          <path d="M6 6 1 3.2A5.7 5.7 0 0 0 5.5 11.7L8 8z" fill="#3b9c4d" stroke="none" />
          <circle cx="6" cy="6" r="2.4" fill="#4a86e8" stroke="#fff" />
        </Svg>
      </TaskButton>
      <TaskButton label="Paint">
        <Svg size="size-[12px]">
          <ellipse cx="5.5" cy="7" rx="5" ry="4" fill="#dfe3e6" stroke="#8fa0ab" strokeWidth=".6" />
          <circle cx="3.5" cy="6" r="1" fill="#c0504a" stroke="none" />
          <circle cx="6" cy="5" r="1" fill="#4b9b52" stroke="none" />
          <circle cx="4" cy="9" r="1" fill="#3f72b8" stroke="none" />
          <path d="M11 .8 6.5 8" stroke="#d9b382" strokeWidth="1.4" />
        </Svg>
      </TaskButton>
      <TaskButton label="3ds Max" className="w-[26px] border-[#76b9ed] bg-[#343c44]">
        <Svg size="size-[12px]">
          <path d="M1 .5h10v11H1z" fill="#1c7d80" stroke="#6ab9b8" strokeWidth=".6" />
          <path d="M9.5 3.5C7 1.5 2.5 3 3 6.2S8.5 9.5 9 7c0-1.8-2.8-2.2-3.8-.6" stroke="#d6f3ef" strokeWidth="1.3" />
        </Svg>
      </TaskButton>
      <div className="mr-[10px] ml-auto flex items-center gap-[4px]">
        <Svg size="size-[8px]">
          <path d="m1 9 5-5 5 5" stroke="#ddd" strokeWidth="1.4" />
        </Svg>
        <Svg size="size-[9px]">
          <path d="M2 4h9.5v5.500H2z" fill="#eee" stroke="#eee" />
          <path d="M0 2.5h4M1.5 2.5V7" stroke="#eee" />
        </Svg>
        <Svg size="size-[9px]">
          <path d="M1 11C1 5 5 1 11 1M4 11c0-4 3-7 7-7M7 11c0-2 2-4 4-4" stroke="#aaa" />
          <circle cx="10.5" cy="10.5" r="1.2" fill="#eee" stroke="none" />
        </Svg>
        <Svg size="size-[9px]">
          <path d="M1 4.5h1.5L5 2v8L2.5 7.5H1zM7 4c1 1.3 1 2.7 0 4M9 2.5c1.7 2.3 1.7 4.7 0 7M10.8 1c2 3 2 7 0 10" stroke="#ddd" strokeWidth=".9" />
        </Svg>
        <span className="w-[16px] text-center text-[6px]">РУС</span>
        <time className="w-[32px] text-center text-[6px] leading-[9px]">
          16:50
          <br />
          11.02.2019
        </time>
        <button type="button" aria-label="Notifications" className="ml-[3px]">
          <Svg size="size-[10px]">
            <path d="M1 1h10v8H8l-2 2-2-2H1z" stroke="#ddd" />
          </Svg>
        </button>
      </div>
    </div>
  );
}

export default function App() {
  return (
    <div className="flex h-screen flex-col overflow-hidden bg-[#c5c5c5] font-['Liberation_Sans',Arial,sans-serif]">
      <TitleBar />
      <MenuBar />
      <Toolbar />
      <div className="flex min-h-0 flex-1">
        <main className="flex min-w-0 flex-1 flex-col">
          <div className="grid min-h-0 flex-1 grid-cols-2 grid-rows-2 gap-[3px] bg-[#c9c9cd] pt-px pr-px">
            <TopView />
            <FrontView />
            <LeftView />
            <PerspectiveView />
          </div>
          <TimeSlider />
          <TrackBar />
        </main>
        <CommandPanel />
      </div>
      <StatusBar />
      <Taskbar />
    </div>
  );
}
